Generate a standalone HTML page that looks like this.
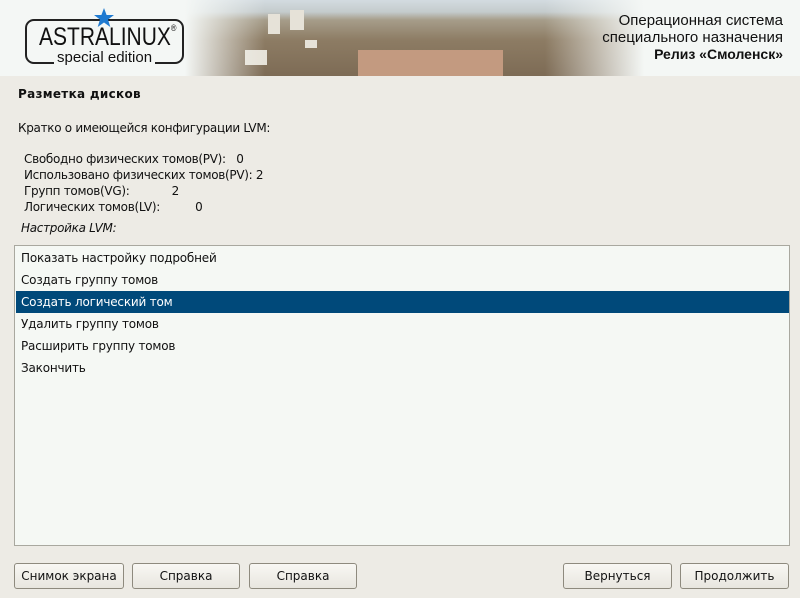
<!DOCTYPE html>
<html><head><meta charset="utf-8"><style>
*{margin:0;padding:0;box-sizing:border-box}
body{width:800px;height:598px;background:#edebe5;font-family:"DejaVu Sans",sans-serif;font-size:12px;color:#111;position:relative;overflow:hidden}
.hdr{position:absolute;left:0;top:0;width:800px;height:76px;background:#f4f7f5;overflow:hidden}
.photo{position:absolute;left:185px;top:0;width:470px;height:76px;
background:linear-gradient(180deg,#d3dbe0 0,#c4cbcc 12px,#a69d8a 20px,#8d7c64 40px,#7d6b55 76px)}
.b{position:absolute;background:#e6e2d8}
.fadeL{position:absolute;left:185px;top:0;width:80px;height:76px;background:linear-gradient(90deg,#f4f7f5,rgba(244,247,245,0))}
.fadeR{position:absolute;left:545px;top:0;width:110px;height:76px;background:linear-gradient(90deg,rgba(244,247,245,0),#f4f7f5 90%)}
.wall{position:absolute;left:358px;top:50px;width:145px;height:26px;background:#c39a80}
.logo{position:absolute;left:25px;top:19px;width:159px;height:45px;border:2px solid #222;border-radius:9px;background:#f4f7f5}
.logo .t{position:absolute;left:12px;top:2px;font-family:"Liberation Sans",sans-serif;font-size:25px;letter-spacing:0;color:#111;transform:scaleX(.84);transform-origin:left top;white-space:nowrap}
.logo .s{position:absolute;left:27px;top:28px;font-family:"Liberation Sans",sans-serif;font-size:15px;background:#f4f7f5;padding:0 3px;color:#111;white-space:nowrap}
.rt{position:absolute;right:17px;text-align:right;font-family:"Liberation Sans",sans-serif;color:#111}
.t1{position:absolute;left:18px;top:87px;font-weight:bold;letter-spacing:.3px;font-size:12px}
.txt{position:absolute;letter-spacing:-0.3px;white-space:pre}
.list{position:absolute;left:14px;top:245px;width:776px;height:301px;border:1px solid #a9a89f;background:#f5f8f4}
.row{position:absolute;left:1px;width:773px;height:22px;line-height:22px;padding-left:5px;letter-spacing:-0.2px}
.sel{background:#00497a;color:#fff}
.btn{position:absolute;top:563px;height:26px;border:1px solid #8e8a7e;border-radius:3px;background:linear-gradient(#f8f7f3,#e8e6df);text-align:center;line-height:24px;letter-spacing:0}
</style></head><body>
<div class="hdr">
<div class="photo"></div>
<div class="b" style="left:268px;top:14px;width:12px;height:20px"></div>
<div class="b" style="left:290px;top:10px;width:14px;height:20px"></div>
<div class="b" style="left:245px;top:50px;width:22px;height:15px"></div>
<div class="b" style="left:305px;top:40px;width:12px;height:8px"></div>
<div class="wall"></div>
<div class="fadeL"></div><div class="fadeR"></div>
<div class="logo"><div class="t">ASTRALINUX<span style="font-size:9px;vertical-align:top">®</span></div><div class="s">special edition</div></div>
<svg style="position:absolute;left:93px;top:7px" width="22" height="22" viewBox="0 0 22 22"><polygon points="11,1 13.6,8 21,8 15,12.5 17.3,20 11,15.5 4.7,20 7,12.5 1,8 8.4,8" fill="#1f7ad0"/></svg>
<div class="rt" style="top:12px;font-size:15px">Операционная система</div>
<div class="rt" style="top:29px;font-size:15px">специального назначения</div>
<div class="rt" style="top:46px;font-size:14px;font-weight:bold">Релиз «Смоленск»</div>
</div>
<div class="t1">Разметка дисков</div>
<div class="txt" style="left:18px;top:121px">Кратко о имеющейся конфигурации LVM:</div>
<div class="txt" style="left:24px;top:152px">Свободно физических томов(PV):   0</div>
<div class="txt" style="left:24px;top:168px">Использовано физических томов(PV): 2</div>
<div class="txt" style="left:24px;top:184px">Групп томов(VG):            2</div>
<div class="txt" style="left:24px;top:200px">Логических томов(LV):          0</div>
<div class="txt" style="left:21px;top:221px;font-style:italic">Настройка LVM:</div>
<div class="list">
<div class="row" style="top:1px">Показать настройку подробней</div>
<div class="row" style="top:23px">Создать группу томов</div>
<div class="row sel" style="top:45px">Создать логический том</div>
<div class="row" style="top:67px">Удалить группу томов</div>
<div class="row" style="top:89px">Расширить группу томов</div>
<div class="row" style="top:111px">Закончить</div>
</div>
<div class="btn" style="left:14px;width:110px">Снимок экрана</div>
<div class="btn" style="left:132px;width:108px">Справка</div>
<div class="btn" style="left:249px;width:108px">Справка</div>
<div class="btn" style="left:563px;width:109px">Вернуться</div>
<div class="btn" style="left:680px;width:109px">Продолжить</div>
</body></html>
